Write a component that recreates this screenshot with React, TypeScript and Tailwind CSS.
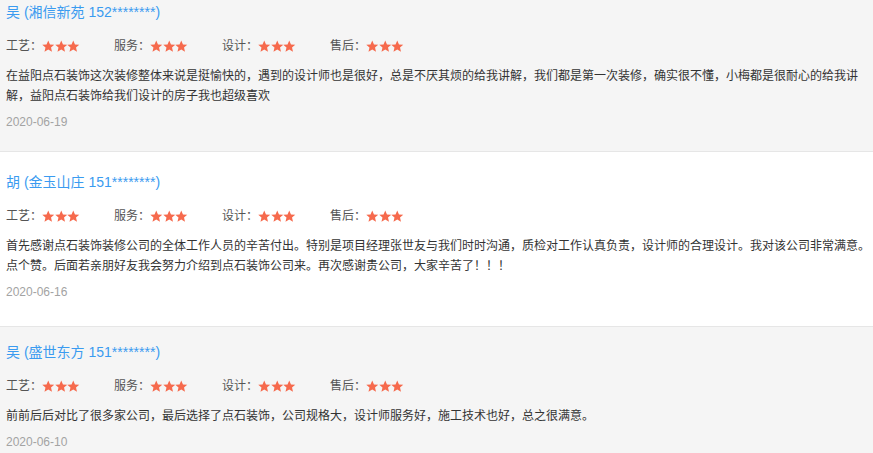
import React from 'react';

interface Review {
    name: string;
    body: string;
    date: string;
    white?: boolean;
}

const reviews: Review[] = [
    {
        name: '吴 (湘信新苑 152********)',
        body: '在益阳点石装饰这次装修整体来说是挺愉快的，遇到的设计师也是很好，总是不厌其烦的给我讲解，我们都是第一次装修，确实很不懂，小梅都是很耐心的给我讲解，益阳点石装饰给我们设计的房子我也超级喜欢',
        date: '2020-06-19',
    },
    {
        name: '胡 (金玉山庄 151********)',
        body: '首先感谢点石装饰装修公司的全体工作人员的辛苦付出。特别是项目经理张世友与我们时时沟通，质检对工作认真负责，设计师的合理设计。我对该公司非常满意。点个赞。后面若亲朋好友我会努力介绍到点石装饰公司来。再次感谢贵公司，大家辛苦了！！！',
        date: '2020-06-16',
        white: true,
    },
    {
        name: '吴 (盛世东方 151********)',
        body: '前前后后对比了很多家公司，最后选择了点石装饰，公司规格大，设计师服务好，施工技术也好，总之很满意。',
        date: '2020-06-10',
    },
];

const labels = ['工艺', '服务', '设计', '售后'];

const Star = () => (
    <svg viewBox="0 0 24 24" className="w-[12.5px] h-[12.5px]" fill="#f66a4d">
        <path d="M12 1l3.3 7.4 8.2.8-6.2 5.4 1.9 8L12 18.4l-7.2 4.2 1.9-8-6.2-5.4 8.2-.8z" />
    </svg>
);

const ReviewItem: React.FC<{ review: Review; first?: boolean }> = ({ review, first }) => {
    const pad = review.white
        ? 'bg-white border-y border-[#e6e6e6] pt-[20px] pb-[24px]'
        : first
            ? 'bg-[#f5f5f5] pt-[2px] pb-[19px]'
            : 'bg-[#f5f5f5] pt-[15px] pb-[19px]';
    return (
        <div className={`${pad} pl-[6px] pr-[2px]`}>
            <div className="h-5 leading-5 text-[14px] text-[#3a9bf0]">{review.name}</div>
            <div className="mt-[14px] flex h-5 items-center text-[12px] text-[#555]">
                {labels.map(label => (
                    <div key={label} className="w-[108px] flex items-center">
                        <span className="leading-5">{label}：</span>
                        <span className="flex items-center">
                            <Star />
                            <Star />
                            <Star />
                        </span>
                    </div>
                ))}
            </div>
            <p className="mt-[10px] text-[12px] leading-5 text-[#333]">{review.body}</p>
            <div className="mt-[6px] text-[12px] leading-5 text-[#a3a3a3]">{review.date}</div>
        </div>
    );
};

export default function App() {
    return (
        <div
            className="w-[873px] h-[453px] overflow-hidden bg-[#f5f5f5]"
            style={{ fontFamily: '"Liberation Sans", Arial, "Noto Sans CJK SC", sans-serif' }}
        >
            {reviews.map((r, i) => (
                <ReviewItem key={i} review={r} first={i === 0} />
            ))}
        </div>
    );
}
